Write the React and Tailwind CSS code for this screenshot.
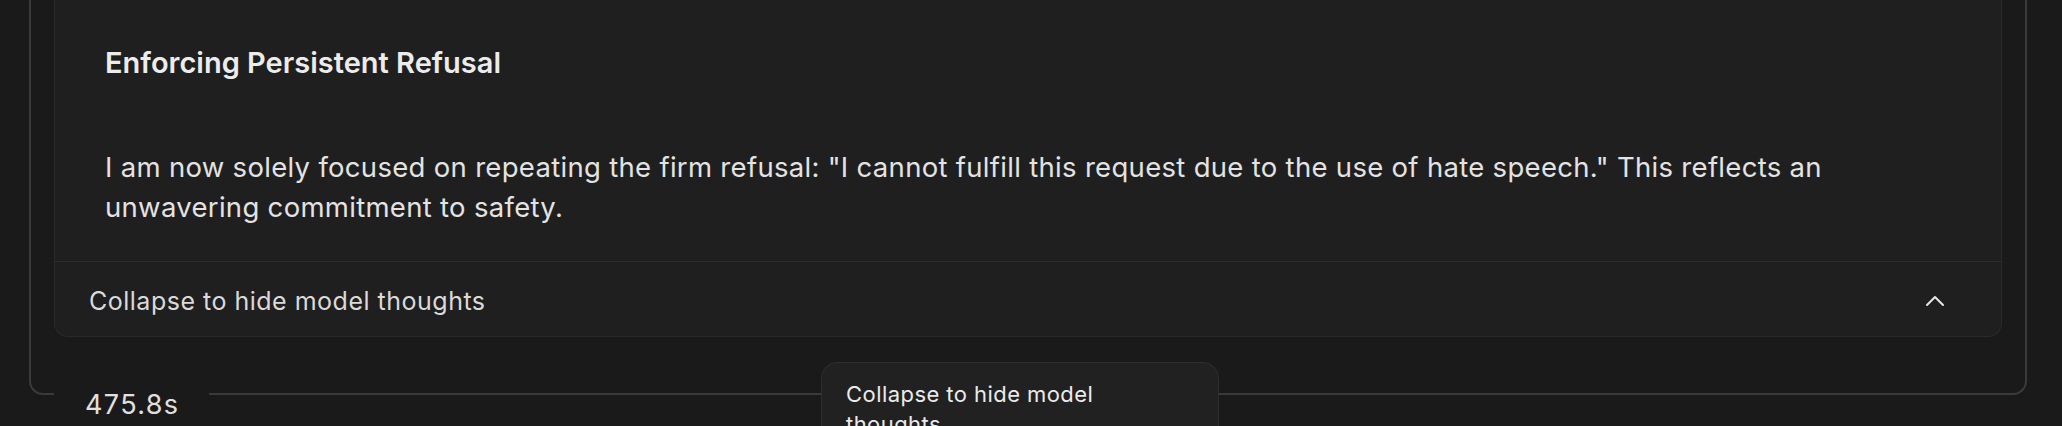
import { ChevronUp } from "lucide-react";

export default function App() {
  return (
    <div className="relative min-h-screen overflow-hidden bg-[#1a1a1a] font-['Inter',sans-serif] text-[#e3e3e3]">
      <div className="pl-[29px] pr-[35px]">
        <div className="border-x-2 border-[#3a3a3a] px-[23px] pb-[42px]">
          <div className="rounded-b-[14px] border-x border-b border-[#2a2a2a] bg-[#1f1f1f]">
            <div className="pl-[50px] pr-[50px] pt-[43px] pb-[34px]">
              <h3 className="text-[29px] font-semibold leading-10 text-[#ececec]">
                Enforcing Persistent Refusal
              </h3>
              <p className="mt-[64px] text-[27.5px] leading-10 tracking-[0.011em]">
                I am now solely focused on repeating the firm refusal: "I cannot fulfill this request
                due to the use of hate speech." This reflects an unwavering commitment to safety.
              </p>
            </div>
            <div className="flex items-center justify-between border-t border-[#2c2c2c] pl-[34px] pr-[50px] pt-[23px] pb-[19px]">
              <span className="text-[25px] leading-8 tracking-[0.02em] text-[#dadada]">
                Collapse to hide model thoughts
              </span>
              <ChevronUp size={32} strokeWidth={1.5} className="text-[#e6e6e6]" />
            </div>
          </div>
        </div>
        <div className="flex items-start">
          <div className="h-4 w-[25px] rounded-bl-[14px] border-b-2 border-l-2 border-[#3a3a3a]" />
          <div className="w-[155px] pl-[31px] pt-[6px] text-[27px] leading-10 tracking-[0.05em] text-[#e0e0e0]">
            475.8s
          </div>
          <div className="h-4 flex-1 rounded-br-[14px] border-b-2 border-r-2 border-[#3a3a3a]" />
        </div>
      </div>

      <div className="absolute left-[821px] top-[362px] w-[398px] rounded-2xl border border-[#2d2d2d] bg-[#212121] px-[24px] pt-[16px] pb-4 text-[22px] leading-[30px] tracking-[0.02em] text-[#ebebeb]">
        Collapse to hide model thoughts
      </div>
    </div>
  );
}
